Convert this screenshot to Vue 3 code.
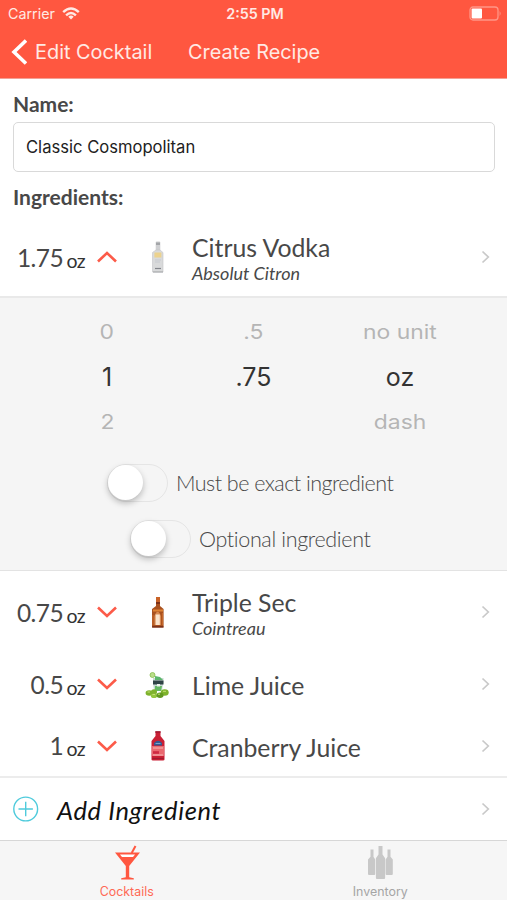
<script setup>
const first = { amount: '1.75', name: 'Citrus Vodka', brand: 'Absolut Citron', art: 'vodka', open: true, size: 'first' }
const rest = [
  { amount: '0.75', name: 'Triple Sec', brand: 'Cointreau', art: 'orange', size: 'tall' },
  { amount: '0.5', name: 'Lime Juice', art: 'lime', size: 'short' },
  { amount: '1', name: 'Cranberry Juice', art: 'cranberry', size: 'last' },
]
const groups = [[first], rest]
const wheels = [
  ['0', '1', '2'],
  ['.5', '.75', ''],
  ['no unit', 'oz', 'dash'],
]
const toggles = ['Must be exact ingredient', 'Optional ingredient']
</script>

<template>
  <div class="phone">
    <header class="top">
      <div class="status">
        <div class="carrier">
          <span class="carrier-name">Carrier</span>
          <svg width="18" height="13" viewBox="0 0 18 13" fill="none" stroke="#ffe9e4" stroke-width="2.4">
            <path d="M1.2 5.2Q9-2.2 16.8 5.2M4.1 8.3Q9 3.7 13.9 8.3" />
            <path d="M9 12.4L6.3 9.7Q9 7.4 11.7 9.7Z" fill="#ffe9e4" stroke="none" />
          </svg>
        </div>
        <span class="time">2:55 PM</span>
        <svg class="battery" width="33" height="15" viewBox="0 0 33 15">
          <rect x="1" y="1" width="28" height="13" rx="3" fill="none" stroke="#ff9686" stroke-width="1.3" />
          <rect x="2.6" y="2.6" width="10.4" height="9.8" rx="1" fill="#fff" />
          <path d="M30.6 5Q32.6 7.5 30.6 10Z" fill="#ff9686" />
        </svg>
      </div>
      <nav class="nav">
        <svg width="17" height="28" viewBox="0 0 17 28" fill="none" stroke="#fff" stroke-width="3.6">
          <path d="M16 2.5L4 14L16 25.5" />
        </svg>
        <span class="back">Edit Cocktail</span>
        <span class="title">Create Recipe</span>
      </nav>
    </header>

    <section class="form">
      <div class="label">Name:</div>
      <div class="input"><span>Classic Cosmopolitan</span></div>
      <div class="label second">Ingredients:</div>
    </section>

    <template v-for="(group, g) in groups" :key="g">
      <div v-for="item in group" :key="item.name" class="row" :class="item.size">
        <div class="amount">{{ item.amount }}<span class="unit">oz</span></div>
        <svg class="toggle-arrow" width="22" height="14" viewBox="0 0 22 14" fill="none" stroke="#fc5b49" stroke-width="2.6">
          <path :d="item.open ? 'M2 11.5L11 3L20 11.5' : 'M2 2.5L11 11L20 2.5'" />
        </svg>
        <div class="art">
          <svg v-if="item.art === 'vodka'" width="14" height="34" viewBox="0 0 14 34">
            <rect x="4.7" y="1.5" width="4.6" height="10" rx="1" fill="#cfd0d2" />
            <rect x="5" y="2.5" width="4" height="2.5" fill="#a3a5a8" />
            <path d="M5 10h4l3 2.5V32H1.5V12.5Z" fill="#d9dadb" stroke="#c4c5c7" stroke-width=".6" />
            <rect x="3.4" y="12.5" width="7" height="5" fill="#ecd28e" />
            <path d="M4 20h6M4 22h5" stroke="#c7cad0" />
            <path d="M4 28.5h6" stroke="#83868c" stroke-width="1.2" />
            <path d="M2 32h10" stroke="#a2a4a7" />
          </svg>
          <svg v-else-if="item.art === 'orange'" width="14" height="34" viewBox="0 0 14 34">
            <path d="M5 2h4v9l3.6 3V32.5H1V14l4-3Z" fill="#a9511f" />
            <path d="M5 2h4v5H5Z" fill="#c96328" />
            <path d="M5 8h4M1.2 31.9h11.2" stroke="#6d2617" stroke-width="1.3" />
            <path d="M2 15.5h10" stroke="#df8434" stroke-width="2" />
            <path d="M3.4 30V21Q6.7 12.5 10 21V30Z" fill="#d98b52" />
            <rect x="4.6" y="19.5" width="4.2" height="10.5" fill="#fae3cb" />
            <path d="M2 20v10M11.4 18v12" stroke="#cb6d2d" />
          </svg>
          <svg v-else-if="item.art === 'lime'" class="lime" width="24" height="28" viewBox="0 0 24 28">
            <circle cx="7.5" cy="4" r="2.5" fill="#b9dd8a" stroke="#86be4b" stroke-width=".8" />
            <path d="M8 7h10.5v4l-1.5 8H9L8 12Z" fill="#c8d9d4" />
            <path d="M8 9.5h10.5v4H8Z" fill="#304346" />
            <path d="M10 5l5 1 3 3h-8Z" fill="#5cb66b" />
            <path d="M10 15h7l-1 5h-6Z" fill="#65b965" />
            <path d="M12 13h3v2.5h-3Z" fill="#edf4ee" />
            <g fill="#7eb22c">
              <ellipse cx="4.2" cy="22" rx="3.6" ry="2.8" />
              <ellipse cx="9" cy="21" rx="3" ry="2.8" />
              <ellipse cx="19.7" cy="21.5" rx="4" ry="3.3" />
              <ellipse cx="9" cy="24.7" rx="3.2" ry="2.3" fill="#93c53d" />
              <ellipse cx="15" cy="24.3" rx="3.5" ry="2.7" fill="#629821" />
            </g>
            <path d="M2.5 21h2.4M7.5 23.5h2.5M13 23.2h2M18 20.3h3" stroke="#c4df72" />
          </svg>
          <svg v-else width="16" height="32" viewBox="0 0 16 32">
            <path d="M5.5 1.5h5V6l4 5v18.5q0 1-1.5 1H3q-1.5 0-1.5-1V11l4-5Z" fill="#c91f34" />
            <path d="M5.3 2h5.3" stroke="#9f1932" stroke-width="1.6" />
            <path d="M4 13Q8 8.5 12 13v2.5H4Z" fill="#345992" />
            <path d="M5.5 13.5h5" stroke="#7da0c8" />
            <rect x="2" y="16" width="12" height="10" fill="#ea686f" />
            <path d="M3 18h10" stroke="#f29a9a" stroke-width="1.6" />
            <path d="M3 22.5h6" stroke="#cf2941" stroke-width="2.6" />
            <path d="M3 25h10" stroke="#f4b8b9" />
            <path d="M2.2 28.5h11.6" stroke="#a01b30" stroke-width="1.2" />
          </svg>
        </div>
        <div class="text">
          <div class="name">{{ item.name }}</div>
          <div v-if="item.brand" class="brand">{{ item.brand }}</div>
        </div>
        <svg class="chevron" width="9" height="14" viewBox="0 0 9 14"><path d="M1.5 1.5L7.3 7L1.5 12.5" /></svg>
      </div>

      <section v-if="g === 0" class="panel">
        <div class="wheels">
          <div v-for="(wheel, w) in wheels" :key="w" class="wheel">
            <div v-for="(value, v) in wheel" :key="v" :class="v === 1 ? 'picked' : 'faded'"><span>{{ value }}</span></div>
          </div>
        </div>
        <div v-for="(toggle, t) in toggles" :key="toggle" class="option" :class="'option-' + t">
          <span class="switch"><span class="knob"></span></span>
          <span class="option-text">{{ toggle }}</span>
        </div>
      </section>
    </template>

    <div class="add">
      <svg width="26" height="26" viewBox="0 0 26 26" fill="none" stroke="#4fcbdc" stroke-width="1.4">
        <circle cx="12.7" cy="13" r="11.9" />
        <path d="M12.7 5.8v14.4M5.5 13h14.4" />
      </svg>
      <span class="add-text">Add Ingredient</span>
      <svg class="chevron" width="9" height="14" viewBox="0 0 9 14"><path d="M1.5 1.5L7.3 7L1.5 12.5" /></svg>
    </div>

    <footer class="tabs">
      <div class="tab active">
        <svg width="26" height="36" viewBox="0 0 26 36" fill="none" stroke="#ff5740">
          <path d="M1 7.4h25L15.2 21v11.2l4.6 1V34.4H7.2v-1.2l4.6-1V21Z" fill="#ff5740" stroke="none" />
          <path d="M6 9.4h15l-2 2.7H8Z" fill="#fff" stroke="none" />
          <path d="M17.7 8L21.5 1" stroke-width="2" />
        </svg>
        <span class="tab-text">Cocktails</span>
      </div>
      <div class="tab">
        <svg width="26" height="36" viewBox="0 0 26 36" fill="#c8c8c8">
          <path d="M3.5 4.5h3v7.3l1.7 2.7V29q0 1-1 1H2q-1 0-1-1V14.5L3.5 11.8ZM20.5 4.5h3v7.3l2.3 2.7V29q0 1-1 1h-5.2q-1 0-1-1V14.5L20.5 11.8Z" />
          <path d="M11.5 1h4v8.5l2.6 3.8V33q0 1-1 1H9.9q-1 0-1-1V13.3L11.5 9.5Z" />
        </svg>
        <span class="tab-text">Inventory</span>
      </div>
    </footer>
  </div>
</template>

<style>
body { margin: 0; background: #fff; }
</style>

<style scoped>
* { box-sizing: border-box; }
svg { display: block; flex: none; }
span { white-space: nowrap; }
.phone { width: 507px; height: 900px; display: flex; flex-direction: column; background: #fff; color: #484848; font-family: Lato, sans-serif; overflow: hidden; }
.top { height: 79px; flex: none; background: #ff5740; border-bottom: 1px solid #f3a095; color: #ffe9e4; font-family: Inter, sans-serif; }
.status { height: 27px; display: grid; grid-template-columns: 1fr auto 1fr; align-items: center; padding: 0 5px 0 8px; }
.carrier { display: flex; align-items: center; gap: 7px; font-size: 14.3px; }
.time { font-size: 14.3px; font-weight: 600; }
.battery { justify-self: end; }
.nav { height: 50px; display: flex; align-items: center; padding-left: 10px; font-size: 19.9px; }
.back { margin-left: 8px; width: 153px; }
.form { height: 139px; flex: none; padding: 12px 12px 0 13px; }
.label { height: 26px; line-height: 26px; font-size: 21px; font-weight: 700; }
.input { height: 50px; margin-top: 5px; display: flex; align-items: center; border: 1px solid #d9d9d9; border-radius: 5px; padding-left: 12px; color: #222; font: 16.6px Inter, sans-serif; }
.label.second { margin-top: 12px; }
.row { flex: none; display: flex; align-items: center; padding-right: 17px; }
.first { height: 78px; }
.tall { height: 82px; }
.short { height: 62px; }
.last { height: 61px; }
.amount { width: 85px; display: flex; justify-content: flex-end; align-items: baseline; font-size: 24.5px; letter-spacing: -.6px; line-height: 30px; padding-top: 3px; }
.unit { margin-left: 3.5px; font-size: 19.5px; color: #333; transform: translateY(1px); }
.toggle-arrow { margin-left: 11px; }
.art { width: 40px; margin-left: 20px; display: flex; justify-content: center; }
.lime { margin-right: 3px; margin-top: 2px; }
.text { flex: 1; margin-left: 14px; padding-top: 3px; }
.name { font-size: 24.8px; line-height: 29px; }
.brand { font-size: 18px; line-height: 22px; font-style: italic; }
.chevron { fill: none; stroke: #c9c9c9; stroke-width: 1.7; }
.panel { height: 275px; flex: none; background: #f5f5f5; border-top: 2px solid #e9e9e9; border-bottom: 1px solid #e3e3e3; display: flex; flex-direction: column; }
.wheels { height: 157px; display: grid; grid-template-columns: repeat(3, 146.5px); justify-content: center; padding-top: 12px; font-family: Inter, sans-serif; }
.wheel { text-align: center; }
.faded, .picked { height: 45px; line-height: 45px; }
.faded { font-size: 21px; color: #b5b5b5; }
.faded span { display: inline-block; transform: translateY(-1px) scale(1.09, .95); }
.picked { font-size: 25px; color: #333; }
.option { height: 56px; display: flex; align-items: center; font-size: 21.5px; font-weight: 300; letter-spacing: -.53px; }
.option-0 { padding-left: 107px; }
.option-1 { padding-left: 130px; letter-spacing: -.35px; }
.switch { width: 61px; height: 38px; border: 1.5px solid #e5e5e5; border-radius: 19px; padding: 1px; }
.knob { display: block; width: 35px; height: 35px; margin-left: -1px; margin-top: -1px; border-radius: 50%; background: #fff; box-shadow: 0 3px 6px rgba(0, 0, 0, .25); }
.option-text { margin-left: 8px; }
.add { height: 64px; flex: none; display: flex; align-items: center; border-top: 2px solid #ececec; padding: 0 17px 0 13px; color: #111; }
.add-text { flex: 1; margin-left: 18px; padding-top: 2px; font-size: 25.5px; letter-spacing: .6px; font-style: italic; }
.tabs { flex: 1; display: grid; grid-template-columns: 1fr 1fr; background: #f6f6f6; border-top: 1px solid #d7d7d7; font-family: Inter, sans-serif; }
.tab { display: flex; flex-direction: column; align-items: center; padding-top: 4px; font-size: 12.4px; color: #a5a5a5; }
.tab.active { color: #ff6955; }
.tab-text { margin-top: 3px; line-height: 15px; }
</style>
